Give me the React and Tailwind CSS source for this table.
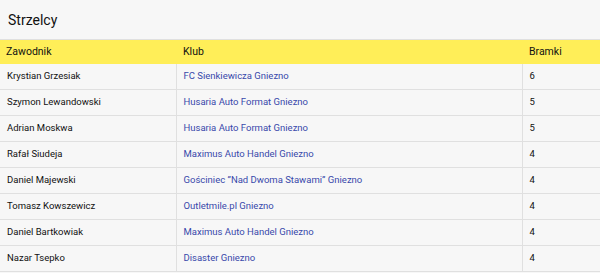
import React from "react";

const rows = [
  ["Krystian Grzesiak", "FC Sienkiewicza Gniezno", "6"],
  ["Szymon Lewandowski", "Husaria Auto Format Gniezno", "5"],
  ["Adrian Moskwa", "Husaria Auto Format Gniezno", "5"],
  ["Rafał Siudeja", "Maximus Auto Handel Gniezno", "4"],
  ["Daniel Majewski", "Gościniec \u201DNad Dwoma Stawami\u201D Gniezno", "4"],
  ["Tomasz Kowszewicz", "Outletmile.pl Gniezno", "4"],
  ["Daniel Bartkowiak", "Maximus Auto Handel Gniezno", "4"],
  ["Nazar Tsepko", "Disaster Gniezno", "4"],
];

export default function App() {
  return (
    <div className="w-[600px] h-[273px] bg-[#f7f7f7] overflow-hidden" style={{ fontFamily: "Roboto, 'Noto Sans', sans-serif" }}>
      <div className="h-[39px] pl-[8px] pt-[1px] flex items-center text-[14px] text-[#111]">Strzelcy</div>
      <table className="w-full border-collapse text-[9.5px] text-[#111]">
        <thead>
          <tr className="bg-[#ffee58] h-[24px] border-t border-[#e0e0e0]">
            <th className="text-left font-normal text-[10.5px] pl-[6px] w-[176px]">Zawodnik</th>
            <th className="text-left font-normal text-[10.5px] pl-[7px] w-[346px]">Klub</th>
            <th className="text-left font-normal text-[10.5px] pl-[7px]">Bramki</th>
          </tr>
        </thead>
        <tbody>
          {rows.map((r, i) => (
            <tr key={i} className="h-[26px] border-b border-[#e0e0e0]">
              <td className="pl-[7px] border-r border-[#e0e0e0]">{r[0]}</td>
              <td className="pl-[7px] border-r border-[#e0e0e0] text-[#3949ab]">{r[1]}</td>
              <td className="pl-[7px]">{r[2]}</td>
            </tr>
          ))}
        </tbody>
      </table>
    </div>
  );
}
